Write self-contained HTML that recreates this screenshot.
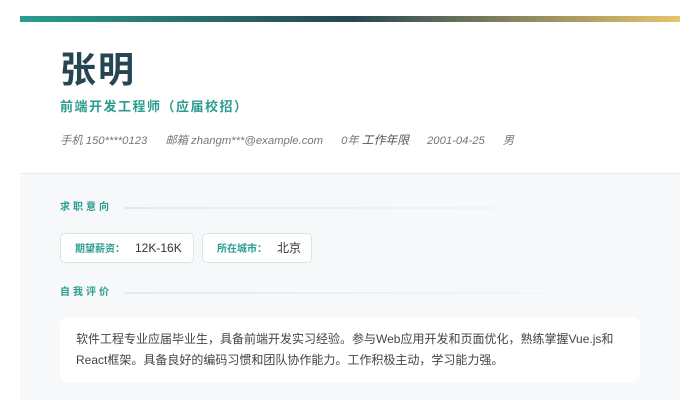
<!DOCTYPE html>
<html><head><meta charset="utf-8"><style>
*{margin:0;padding:0;box-sizing:border-box}
body{width:700px;height:400px;background:#fff;font-family:"Liberation Sans","Noto Sans CJK SC",sans-serif;overflow:hidden;position:relative}
.bar{position:absolute;left:20px;top:16px;width:660px;height:6px;background:linear-gradient(90deg,#2a9d8f 0%,#264653 50%,#e9c46a 100%)}
.name{position:absolute;left:60px;top:48px;font-size:36px;font-weight:bold;color:#264653;letter-spacing:2px;line-height:44px}
.title{position:absolute;left:60px;top:98px;font-size:13px;font-weight:bold;color:#2a9d8f;letter-spacing:1.5px;line-height:18px}
.meta{position:absolute;left:60px;top:133px;font-size:11.3px;font-style:italic;color:#777;line-height:14px;white-space:nowrap}
.meta span{margin-right:18px}
.meta b{font-weight:normal;color:#555;font-size:11.8px}
.gray{position:absolute;left:20px;top:173px;width:660px;height:227px;background:#f6f8fa;border-top:1px solid #e8ecef}
.sec{position:absolute;left:60px;font-size:10px;font-weight:bold;color:#2a9d8f;letter-spacing:3px;line-height:14px}
.line{position:absolute;left:124px;width:500px;height:2px;background:linear-gradient(90deg,#dceeed,rgba(220,238,237,0))}
.tag{position:absolute;top:233px;height:30px;background:#fff;border:1px solid #cdebe7;border-radius:5px;font-size:12px;color:#333;line-height:28px;padding-left:14px;white-space:nowrap}
.tag small{font-size:10px;font-weight:bold;color:#2a9d8f;margin-right:10px}
.card{position:absolute;left:60px;top:317px;width:580px;height:66px;background:#fff;border-radius:8px;padding:12px 16px;font-size:12px;color:#444;line-height:21px}
</style></head><body>
<div class="bar"></div>
<div class="name">张明</div>
<div class="title">前端开发工程师（应届校招）</div>
<div class="meta"><span>手机 150****0123</span><span>邮箱 zhangm***@example.com</span><span>0年 <b>工作年限</b></span><span>2001-04-25</span><span>男</span></div>
<div class="gray"></div>
<div class="sec" style="top:201px">求职意向</div>
<div class="line" style="top:207px"></div>
<div class="tag" style="left:60px;width:134px"><small>期望薪资：</small>12K-16K</div>
<div class="tag" style="left:202px;width:110px"><small>所在城市：</small>北京</div>
<div class="sec" style="top:286px">自我评价</div>
<div class="line" style="top:292px"></div>
<div class="card">软件工程专业应届毕业生，具备前端开发实习经验。参与Web应用开发和页面优化，熟练掌握Vue.js和React框架。具备良好的编码习惯和团队协作能力。工作积极主动，学习能力强。</div>
</body></html>
